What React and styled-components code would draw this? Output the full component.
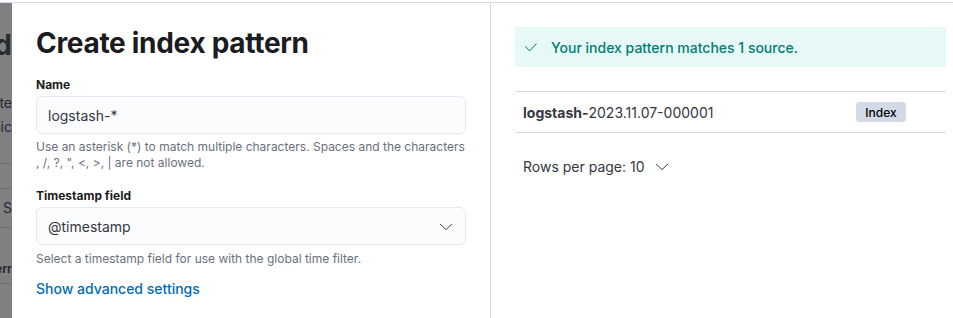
import styled, { createGlobalStyle } from "styled-components";

const GlobalStyle = createGlobalStyle`
  html, body {
    margin: 0;
    padding: 0;
    background: #fff;
  }
  body {
    font-family: Inter, "Noto Sans", sans-serif;
    color: #343741;
    -webkit-font-smoothing: antialiased;
  }
`;

const Page = styled.div`
  margin-top: 2px;
  border-top: 1px solid #d3dae6;
  height: 315px;
  display: flex;
  overflow: hidden;
`;

const Backdrop = styled.div`
  width: 12px;
  flex: none;
  background: #7f8082;
  display: flex;
  flex-direction: column;
  align-items: flex-end;
  overflow: hidden;
  color: #2a2b2e;
`;

const BackLine = styled.div`
  display: flex;
  justify-content: flex-end;
  white-space: nowrap;
  font-size: ${(p) => p.$size || 14}px;
  font-weight: ${(p) => (p.$bold ? 700 : 400)};
  line-height: ${(p) => p.$lh || 24}px;
  min-height: ${(p) => p.$lh || 24}px;
  margin-top: ${(p) => p.$mt || 0}px;
  width: 12px;
  flex: none;
  ${(p) => p.$rule && "border-bottom: 1px solid #6d6e70;"}
`;

const Flyout = styled.div`
  flex: 1;
  display: flex;
  background: #fff;
`;

const FormColumn = styled.div`
  width: 430px;
  flex: none;
  padding: 20px 24px 0 24px;
  border-right: 1px solid #d3dae6;
`;

const Title = styled.h1`
  margin: 0 0 13px;
  font-size: 28px;
  line-height: 40px;
  font-weight: 700;
  color: #1a1c21;
  letter-spacing: -0.3px;
`;

const Field = styled.div`
  margin-bottom: ${(p) => p.$gap ?? 16}px;
`;

const Label = styled.div`
  font-size: 12px;
  line-height: 18px;
  font-weight: 700;
  color: #1a1c21;
  margin-bottom: 2px;
`;

const Control = styled.div`
  height: 38px;
  box-sizing: border-box;
  border: 1px solid #e4e8ef;
  border-radius: 6px;
  background: #fbfcfd;
  display: flex;
  align-items: center;
  justify-content: space-between;
  padding: 0 12px 0 11px;
  font-size: 14px;
  color: #343741;
`;

const Help = styled.div`
  font-size: 12px;
  line-height: 16px;
  color: #69707d;
  margin-top: ${(p) => p.$mt ?? 5}px;
`;

const Link = styled.a`
  display: inline-block;
  font-size: 14px;
  line-height: 20px;
  font-weight: 500;
  color: #006bb8;
  text-decoration: none;
`;

const ResultColumn = styled.div`
  flex: 1;
  padding: 24px 7px 0 24px;
`;

const Callout = styled.div`
  height: 40px;
  background: #e6f9f7;
  display: flex;
  align-items: center;
  gap: 14px;
  padding-left: 10px;
  font-size: 14px;
  font-weight: 500;
  color: #017d73;
`;

const Table = styled.div`
  margin-top: 24px;
  border-top: 1px solid #d3dae6;
`;

const Row = styled.div`
  height: 40px;
  display: flex;
  align-items: center;
  border-bottom: 1px solid #d3dae6;
  padding-left: 8px;
  font-size: 14px;
  color: #343741;
`;

const Name = styled.div`
  width: 333px;
  b {
    font-weight: 700;
  }
`;

const Badge = styled.span`
  display: inline-flex;
  align-items: center;
  justify-content: center;
  height: 20px;
  width: 50px;
  border-radius: 3px;
  background: #d3dae6;
  font-size: 12px;
  font-weight: 500;
  color: #000;
`;

const Pager = styled.div`
  display: flex;
  align-items: center;
  gap: 10px;
  padding: 25px 0 0 8px;
  font-size: 14px;
  color: #343741;
`;

const Chevron = ({ size = 14, color = "#343741" }) => (
  <svg width={size} height={size / 2} viewBox="0 0 16 8" fill="none">
    <path d="M1 1l7 6.5L15 1" stroke={color} strokeWidth="1.1" />
  </svg>
);

const Check = () => (
  <svg width="12" height="9" viewBox="0 0 12 9" fill="none">
    <path d="M0.5 3.5L4.5 8L11.5 0.5" stroke="#017d73" strokeWidth="1" />
  </svg>
);

export default function App() {
  return (
    <>
      <GlobalStyle />
      <Page>
        <Backdrop>
          <BackLine $size={28} $bold $lh={40} $mt={22}>Create index pattern d</BackLine>
          <BackLine $mt={26}>Create</BackLine>
          <BackLine>Basic</BackLine>
          <BackLine $rule />
          <BackLine $rule />
          <BackLine $lh={38} $rule>Index patterns S</BackLine>
          <BackLine $size={12} $bold $lh={28} $mt={27} $rule>Pattern err</BackLine>
        </Backdrop>
        <Flyout>
          <FormColumn>
            <Title>Create index pattern</Title>
            <Field>
              <Label>Name</Label>
              <Control>logstash-*</Control>
              <Help>
                Use an asterisk (*) to match multiple characters. Spaces and the characters
                <br />, /, ?, ", &lt;, &gt;, | are not allowed.
              </Help>
            </Field>
            <Field $gap={11}>
              <Label>Timestamp field</Label>
              <Control>
                @timestamp
                <Chevron size={14} />
              </Control>
              <Help $mt={6}>Select a timestamp field for use with the global time filter.</Help>
            </Field>
            <Link href="#">Show advanced settings</Link>
          </FormColumn>
          <ResultColumn>
            <Callout>
              <Check />
              Your index pattern matches 1 source.
            </Callout>
            <Table>
              <Row>
                <Name>
                  <b>logstash-</b>2023.11.07-000001
                </Name>
                <Badge>Index</Badge>
              </Row>
            </Table>
            <Pager>
              Rows per page: 10
              <Chevron size={14} />
            </Pager>
          </ResultColumn>
        </Flyout>
      </Page>
    </>
  );
}
